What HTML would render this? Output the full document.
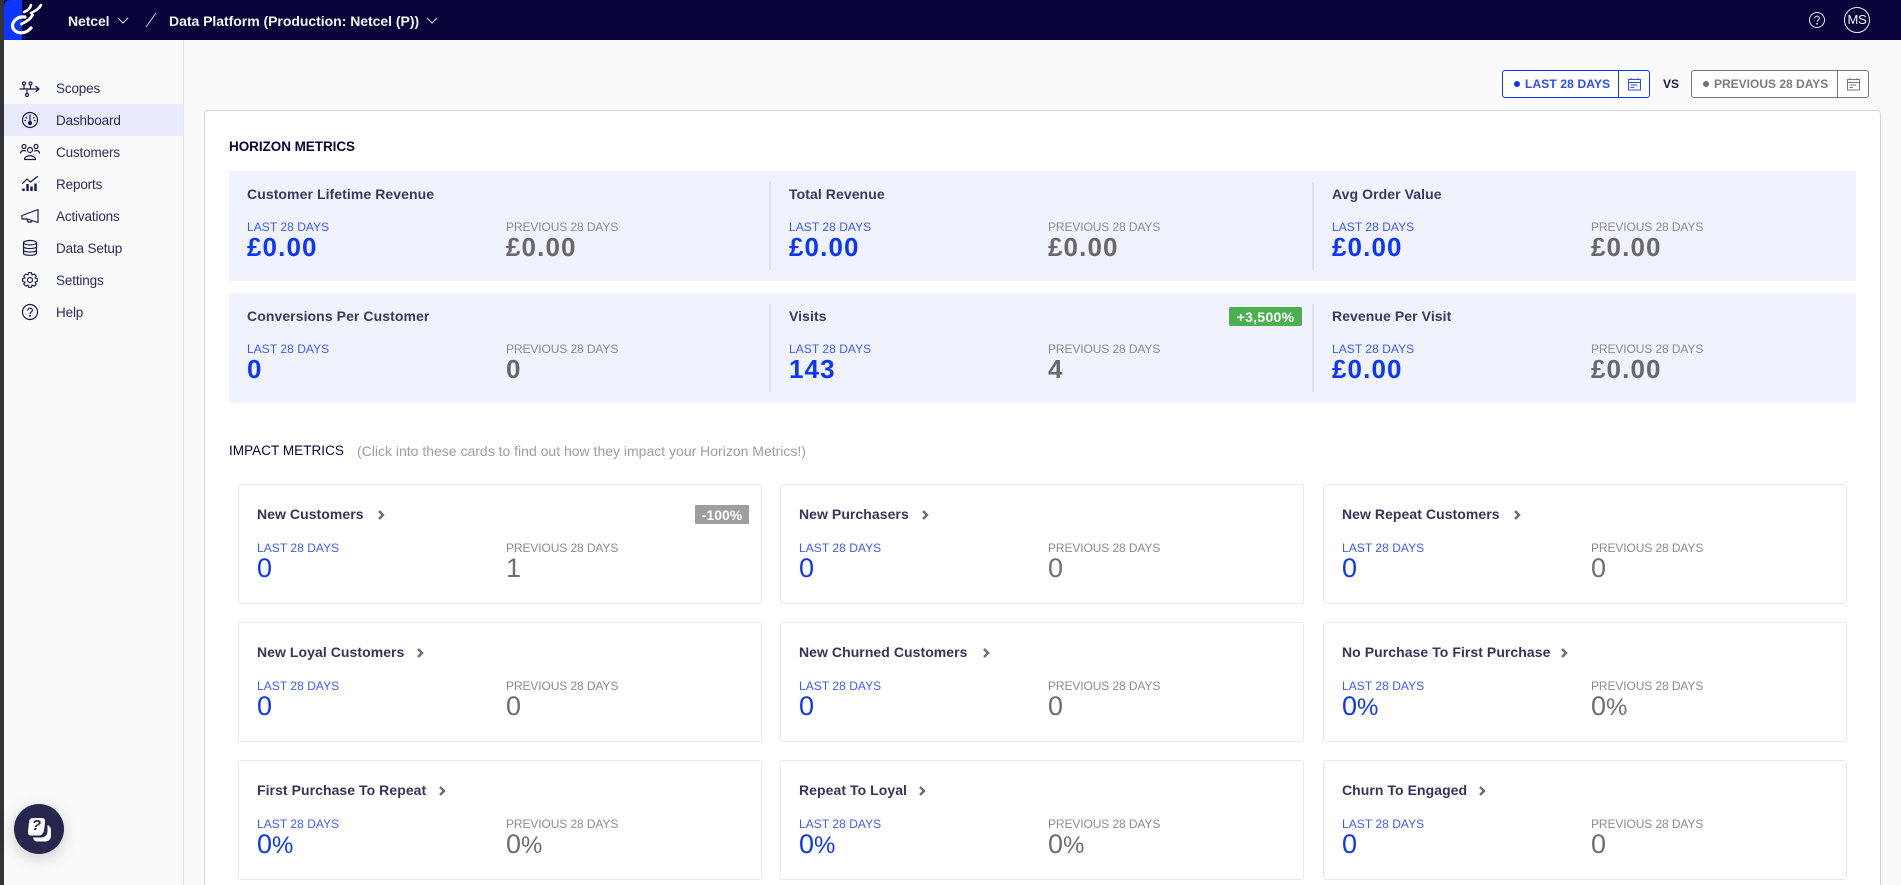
<!DOCTYPE html>
<html lang="en"><head><meta charset="utf-8"><title>Dashboard</title>
<style>
*{box-sizing:border-box}
html,body{margin:0;padding:0;width:1901px;height:885px;overflow:hidden;background:#fafafa;font-family:"Liberation Sans",Arial,sans-serif}
#root{position:relative;width:1901px;height:885px;overflow:hidden;background:#fafafa}
.t{position:absolute;white-space:nowrap;line-height:20px;height:20px}
.a{position:absolute}
svg{position:absolute;overflow:visible}
.nav{font-size:13.5px;color:#2b2b5c;letter-spacing:-.15px;left:56px}
.ic{fill:none;stroke:#17174a;stroke-width:1.15;stroke-linecap:round;stroke-linejoin:round}
.bt{font-size:14px;font-weight:700;color:#3a3a5e;letter-spacing:.08px}
.ct{font-size:14px;font-weight:700;color:#35355c;letter-spacing:.06px}
.ll{font-size:12px;color:#3d5cff;letter-spacing:.05px}
.pl{font-size:12px;color:#8c8c8c;letter-spacing:-.1px}
.bv{font-size:26px;font-weight:700;color:#0a36ff;letter-spacing:1.1px}
.bp{font-size:26px;font-weight:700;color:#686868;letter-spacing:1.1px}
.cv{font-size:27px;color:#0a36ff}
.cp{font-size:27px;color:#6e6e6e}
.cv span,.cp span{font-size:24px}
.band{position:absolute;left:229px;width:1627px;height:110px;background:#f0f2fd}
.div{position:absolute;width:2px;height:88px;background:#dfe2ee}
.card{position:absolute;width:524px;height:120px;background:#fff;border:1px solid #e9e9e9;border-radius:3px}
.chev{fill:none;stroke:#6f6f72;stroke-width:2.5}
</style></head><body>
<div id="root">

<div class="a" style="left:0;top:0;width:4px;height:885px;background:#333"></div>
<div class="a" style="left:0;top:0;width:1901px;height:40px;background:#07053a"></div>
<div class="a" style="left:0;top:0;width:4px;height:40px;background:#333"></div>
<div class="a" style="left:4px;top:0;width:18px;height:40px;background:#0a36ff;border-top-left-radius:6px"></div>
<svg style="left:0;top:0" width="50" height="40" fill="none" stroke="#fff" stroke-linecap="round">
<path d="M25 17C18 16 12.500 21 12.500 26C13 33 24 36 31 28" stroke-width="3.200"/>
<path d="M24 12C27 11 30 9 31 5" stroke-width="2.600"/>
<path d="M31 13C35 11 39 9 41 5" stroke-width="2.600"/>
<path d="M21.500 24C25 22 30 20 32.500 15" stroke-width="2.800"/>
</svg>

<div class="t" style="left:68px;top:11px;font-size:14px;font-weight:700;color:#f2f2f7;letter-spacing:-.1px">Netcel</div>
<svg style="left:117px;top:17px" width="12" height="7" fill="none" stroke="#e6e6ee" stroke-width="1"><path d="M1 1L6 6L11 1"/></svg>
<svg style="left:146px;top:13px" width="10" height="14" fill="none" stroke="#cfd2e6" stroke-width="1"><path d="M0 14L10 0"/></svg>
<div class="t" style="left:169px;top:11px;font-size:14px;font-weight:700;color:#f2f2f7;letter-spacing:-.03px">Data Platform (Production: Netcel (P))</div>
<svg style="left:426px;top:17px" width="12" height="7" fill="none" stroke="#e6e6ee" stroke-width="1"><path d="M1 1L6 6L11 1"/></svg>

<svg style="left:1809px;top:12px" width="16" height="16" fill="none" stroke="#e8e8ee" stroke-width="1"><circle cx="8" cy="8" r="7.5"/><path d="M5.8 6.2C5.8 3.4 10.4 3.6 10.4 6.2C10.4 8 8.1 7.8 8.1 9.8"/><circle cx="8.1" cy="11.8" r=".4"/></svg>
<div class="a" style="left:1844px;top:7px;width:26px;height:26px;border:1px solid #eee;border-radius:50%"></div>
<div class="t" style="left:1844px;top:10px;width:26px;text-align:center;font-size:13px;color:#f4f4ff;letter-spacing:-.2px">MS</div>

<!-- sidebar -->
<div class="a" style="left:183px;top:40px;width:1px;height:845px;background:#e6e6e6"></div>
<div class="a" style="left:4px;top:104px;width:179px;height:32px;background:#e7ebfc"></div>

<svg class="ic" style="left:20px;top:81px" width="20" height="16"><path d="M0 8H19M16 5.500L19 8L16 10.500"/><circle cx="4" cy="2.500" r="1.500"/><circle cx="10.500" cy="2.500" r="1.500"/><circle cx="7" cy="14" r="1.500"/><path d="M4 4V8M10.500 4V8M7 8V12.500"/></svg>
<div class="t nav" style="top:79px">Scopes</div>

<svg class="ic" style="left:22px;top:112px" width="16" height="16"><circle cx="8" cy="8" r="7.500"/><path d="M8 3V9.500M4 5.500L4.500 6M12 5.500L11.500 6M2.800 8.500H3.500M12.500 8.500H13.200"/><circle cx="8" cy="11" r="1.500" fill="#17174a"/></svg>
<div class="t nav" style="top:111px">Dashboard</div>

<svg class="ic" style="left:20px;top:144px" width="20" height="16"><circle cx="4" cy="2.500" r="2"/><circle cx="16" cy="2.500" r="2"/><circle cx="10" cy="6" r="2.500"/><path d="M0.500 9C1 6.500 4 6 5.500 7M19.500 9C19 6.500 16 6 14.500 7M4.500 15.500C4.500 10.500 15.500 10.500 15.500 15.500Z"/></svg>
<div class="t nav" style="top:143px">Customers</div>

<svg class="ic" style="left:22px;top:176px" width="16" height="16"><path d="M0.500 7.500L5 3L8.500 6L15.500 0.500"/><path stroke-width="2.400" d="M1.500 15V12.500M5.500 15V8M9.500 15V10.500M13.500 15V7.500" stroke-linecap="butt"/></svg>
<div class="t nav" style="top:175px">Reports</div>

<svg class="ic" style="left:21px;top:209px" width="18" height="14"><path d="M17 0.500V13.500L6.500 10L1 10V6.500L17 0.500ZM1 6.500V10M6 10.500L7 13H10.500L11 11.500"/></svg>
<div class="t nav" style="top:207px">Activations</div>

<svg class="ic" style="left:23px;top:240px" width="14" height="16"><ellipse cx="7" cy="2.700" rx="6.500" ry="2.200"/><path d="M0.500 2.700V13.300C0.500 16 13.500 16 13.500 13.300V2.700M0.500 6.500C0.500 9.200 13.500 9.200 13.500 6.500M0.500 10C0.500 12.700 13.500 12.700 13.500 10"/></svg>
<div class="t nav" style="top:239px">Data Setup</div>

<svg class="ic" style="left:22px;top:272px" width="16" height="16"><circle cx="8" cy="8" r="2.500"/><path d="M6.500 0.700H9.500L10 3L12.200 2L14.300 4.100L13 6L15.300 6.500V9.500L13 10L14.300 12L12.200 14.100L10 13L9.500 15.300H6.500L6 13L3.800 14.100L1.700 12L3 10L0.700 9.500V6.500L3 6L1.700 4.100L3.800 2L6 3Z"/></svg>
<div class="t nav" style="top:271px">Settings</div>

<svg class="ic" style="left:22px;top:304px" width="16" height="16"><circle cx="8" cy="8" r="7.500"/><path d="M5.800 6.200C5.800 3.400 10.400 3.600 10.400 6.200C10.400 8 8.100 7.800 8.100 9.800"/><circle cx="8.100" cy="11.800" r=".4"/></svg>
<div class="t nav" style="top:303px">Help</div>

<!-- help bubble -->
<div class="a" style="left:14px;top:804px;width:50px;height:50px;border-radius:50%;background:#26264f;box-shadow:0 4px 16px rgba(0,0,0,.18)"></div>
<svg style="left:26px;top:816px" width="26" height="26"><path d="M21.500 9C23.500 10 25 11.500 25 14V19C25 23 23 25.500 19 25.500H11C9 25.500 7.500 24 7 21.500H15C19 21.500 21.500 19 21.500 15Z" fill="#fff"/><path d="M7 2H15.500C18.500 2 19.500 3.500 19 6.500L18 14.500C17.500 17.500 15.500 19.500 12.500 19.500H5C2.500 19.500 1.700 18 2 15.500L3 6.500C3.300 3.500 4.500 2 7 2Z" fill="#fff"/></svg>
<div class="t" style="left:28px;top:818px;width:17px;text-align:center;font-size:15px;font-weight:700;color:#26264f;font-style:italic;line-height:16px">?</div>

<!-- date controls -->
<div class="a" style="left:1502px;top:70px;width:148px;height:28px;border:1px solid #0a36ff;border-radius:3px;background:#fff"></div>
<div class="a" style="left:1618px;top:70px;width:1px;height:28px;background:#0a36ff"></div>
<div class="a" style="left:1514px;top:81px;width:6px;height:6px;border-radius:50%;background:#0a36ff"></div>
<div class="t" style="left:1525px;top:74px;font-size:12px;font-weight:700;color:#2a4cff;letter-spacing:.14px">LAST 28 DAYS</div>
<svg style="left:1628px;top:78px" width="13" height="13" fill="none" stroke="#2a4cff" stroke-width="1"><rect x=".5" y="1.500" width="12" height="10.500"/><path d="M.5 4.500H12.500M2.500 7H9M2.500 9.500H6M3 0V1.500M10 0V1.500"/></svg>
<div class="t" style="left:1663px;top:74px;font-size:12px;font-weight:700;color:#17174a">VS</div>
<div class="a" style="left:1691px;top:70px;width:178px;height:28px;border:1px solid #757575;border-radius:3px;background:#fff"></div>
<div class="a" style="left:1837px;top:70px;width:1px;height:28px;background:#757575"></div>
<div class="a" style="left:1703px;top:81px;width:6px;height:6px;border-radius:50%;background:#6f6f6f"></div>
<div class="t" style="left:1714px;top:74px;font-size:12px;font-weight:700;color:#7c7c7c">PREVIOUS 28 DAYS</div>
<svg style="left:1847px;top:78px" width="13" height="13" fill="none" stroke="#777" stroke-width="1"><rect x=".5" y="1.500" width="12" height="10.500"/><path d="M.5 4.500H12.500M2.500 7H9M2.500 9.500H6M3 0V1.500M10 0V1.500"/></svg>

<!-- main card -->
<div class="a" style="left:204px;top:110px;width:1677px;height:790px;background:#fff;border:1px solid #d6d6d6;border-radius:4px"></div>
<div class="t" style="left:229px;top:137px;font-size:13.500px;font-weight:700;color:#07053a;letter-spacing:-.05px">HORIZON METRICS</div>

<div class="band" style="top:171px"></div>
<div class="band" style="top:293px"></div>
<div class="div" style="left:769px;top:182px"></div>
<div class="div" style="left:1312px;top:182px"></div>
<div class="div" style="left:769px;top:304px"></div>
<div class="div" style="left:1312px;top:304px"></div>

<div class="t bt" style="left:247px;top:184px">Customer Lifetime Revenue</div>
<div class="t ll" style="left:247px;top:217px">LAST 28 DAYS</div>
<div class="t bv" style="left:247px;top:237px">£0.00</div>
<div class="t pl" style="left:506px;top:217px">PREVIOUS 28 DAYS</div>
<div class="t bp" style="left:506px;top:237px">£0.00</div>

<div class="t bt" style="left:789px;top:184px">Total Revenue</div>
<div class="t ll" style="left:789px;top:217px">LAST 28 DAYS</div>
<div class="t bv" style="left:789px;top:237px">£0.00</div>
<div class="t pl" style="left:1048px;top:217px">PREVIOUS 28 DAYS</div>
<div class="t bp" style="left:1048px;top:237px">£0.00</div>

<div class="t bt" style="left:1332px;top:184px">Avg Order Value</div>
<div class="t ll" style="left:1332px;top:217px">LAST 28 DAYS</div>
<div class="t bv" style="left:1332px;top:237px">£0.00</div>
<div class="t pl" style="left:1591px;top:217px">PREVIOUS 28 DAYS</div>
<div class="t bp" style="left:1591px;top:237px">£0.00</div>

<div class="t bt" style="left:247px;top:305.500px">Conversions Per Customer</div>
<div class="t ll" style="left:247px;top:339px">LAST 28 DAYS</div>
<div class="t bv" style="left:247px;top:359px">0</div>
<div class="t pl" style="left:506px;top:339px">PREVIOUS 28 DAYS</div>
<div class="t bp" style="left:506px;top:359px">0</div>

<div class="t bt" style="left:789px;top:305.500px">Visits</div>
<div class="a" style="left:1229px;top:307px;width:73px;height:19px;background:#4caf50;border-radius:2px"></div>
<div class="t" style="left:1229px;top:306.500px;width:73px;text-align:center;font-size:14px;font-weight:700;color:#fff;letter-spacing:.3px">+3,500%</div>
<div class="t ll" style="left:789px;top:339px">LAST 28 DAYS</div>
<div class="t bv" style="left:789px;top:359px">143</div>
<div class="t pl" style="left:1048px;top:339px">PREVIOUS 28 DAYS</div>
<div class="t bp" style="left:1048px;top:359px">4</div>

<div class="t bt" style="left:1332px;top:305.500px">Revenue Per Visit</div>
<div class="t ll" style="left:1332px;top:339px">LAST 28 DAYS</div>
<div class="t bv" style="left:1332px;top:359px">£0.00</div>
<div class="t pl" style="left:1591px;top:339px">PREVIOUS 28 DAYS</div>
<div class="t bp" style="left:1591px;top:359px">£0.00</div>

<div class="t" style="left:229px;top:441px;font-size:13.500px;color:#07053a;letter-spacing:.05px;font-weight:400">IMPACT METRICS</div>
<div class="t" style="left:357px;top:440.500px;font-size:14px;color:#9d9da6">(Click into these cards to find out how they impact your Horizon Metrics!)</div>

<div class="card" style="left:238px;top:484px"></div>
<div class="card" style="left:780px;top:484px"></div>
<div class="card" style="left:1323px;top:484px"></div>
<div class="card" style="left:238px;top:622px"></div>
<div class="card" style="left:780px;top:622px"></div>
<div class="card" style="left:1323px;top:622px"></div>
<div class="card" style="left:238px;top:760px"></div>
<div class="card" style="left:780px;top:760px"></div>
<div class="card" style="left:1323px;top:760px"></div>

<!-- row 1 -->
<div class="t ct" style="left:257px;top:504px">New Customers</div>
<svg class="chev" style="left:378px;top:510px" width="6" height="10"><path d="M1 1L5 5L1 9"/></svg>
<div class="a" style="left:695px;top:505px;width:54px;height:19px;background:#9e9e9e;border-radius:1px"></div>
<div class="t" style="left:695px;top:505px;width:54px;text-align:center;font-size:14px;font-weight:700;color:#fff">-100%</div>
<div class="t ll" style="left:257px;top:538px">LAST 28 DAYS</div>
<div class="t cv" style="left:257px;top:558px">0</div>
<div class="t pl" style="left:506px;top:538px">PREVIOUS 28 DAYS</div>
<div class="t cp" style="left:506px;top:558px">1</div>

<div class="t ct" style="left:799px;top:504px">New Purchasers</div>
<svg class="chev" style="left:922px;top:510px" width="6" height="10"><path d="M1 1L5 5L1 9"/></svg>
<div class="t ll" style="left:799px;top:538px">LAST 28 DAYS</div>
<div class="t cv" style="left:799px;top:558px">0</div>
<div class="t pl" style="left:1048px;top:538px">PREVIOUS 28 DAYS</div>
<div class="t cp" style="left:1048px;top:558px">0</div>

<div class="t ct" style="left:1342px;top:504px">New Repeat Customers</div>
<svg class="chev" style="left:1514px;top:510px" width="6" height="10"><path d="M1 1L5 5L1 9"/></svg>
<div class="t ll" style="left:1342px;top:538px">LAST 28 DAYS</div>
<div class="t cv" style="left:1342px;top:558px">0</div>
<div class="t pl" style="left:1591px;top:538px">PREVIOUS 28 DAYS</div>
<div class="t cp" style="left:1591px;top:558px">0</div>

<!-- row 2 -->
<div class="t ct" style="left:257px;top:642px">New Loyal Customers</div>
<svg class="chev" style="left:417px;top:648px" width="6" height="10"><path d="M1 1L5 5L1 9"/></svg>
<div class="t ll" style="left:257px;top:676px">LAST 28 DAYS</div>
<div class="t cv" style="left:257px;top:696px">0</div>
<div class="t pl" style="left:506px;top:676px">PREVIOUS 28 DAYS</div>
<div class="t cp" style="left:506px;top:696px">0</div>

<div class="t ct" style="left:799px;top:642px">New Churned Customers</div>
<svg class="chev" style="left:983px;top:648px" width="6" height="10"><path d="M1 1L5 5L1 9"/></svg>
<div class="t ll" style="left:799px;top:676px">LAST 28 DAYS</div>
<div class="t cv" style="left:799px;top:696px">0</div>
<div class="t pl" style="left:1048px;top:676px">PREVIOUS 28 DAYS</div>
<div class="t cp" style="left:1048px;top:696px">0</div>

<div class="t ct" style="left:1342px;top:642px">No Purchase To First Purchase</div>
<svg class="chev" style="left:1561px;top:648px" width="6" height="10"><path d="M1 1L5 5L1 9"/></svg>
<div class="t ll" style="left:1342px;top:676px">LAST 28 DAYS</div>
<div class="t cv" style="left:1342px;top:696px">0<span>%</span></div>
<div class="t pl" style="left:1591px;top:676px">PREVIOUS 28 DAYS</div>
<div class="t cp" style="left:1591px;top:696px">0<span>%</span></div>

<!-- row 3 -->
<div class="t ct" style="left:257px;top:780px">First Purchase To Repeat</div>
<svg class="chev" style="left:439px;top:786px" width="6" height="10"><path d="M1 1L5 5L1 9"/></svg>
<div class="t ll" style="left:257px;top:814px">LAST 28 DAYS</div>
<div class="t cv" style="left:257px;top:834px">0<span>%</span></div>
<div class="t pl" style="left:506px;top:814px">PREVIOUS 28 DAYS</div>
<div class="t cp" style="left:506px;top:834px">0<span>%</span></div>

<div class="t ct" style="left:799px;top:780px">Repeat To Loyal</div>
<svg class="chev" style="left:919px;top:786px" width="6" height="10"><path d="M1 1L5 5L1 9"/></svg>
<div class="t ll" style="left:799px;top:814px">LAST 28 DAYS</div>
<div class="t cv" style="left:799px;top:834px">0<span>%</span></div>
<div class="t pl" style="left:1048px;top:814px">PREVIOUS 28 DAYS</div>
<div class="t cp" style="left:1048px;top:834px">0<span>%</span></div>

<div class="t ct" style="left:1342px;top:780px">Churn To Engaged</div>
<svg class="chev" style="left:1479px;top:786px" width="6" height="10"><path d="M1 1L5 5L1 9"/></svg>
<div class="t ll" style="left:1342px;top:814px">LAST 28 DAYS</div>
<div class="t cv" style="left:1342px;top:834px">0</div>
<div class="t pl" style="left:1591px;top:814px">PREVIOUS 28 DAYS</div>
<div class="t cp" style="left:1591px;top:834px">0</div>

</div>
</body></html>
